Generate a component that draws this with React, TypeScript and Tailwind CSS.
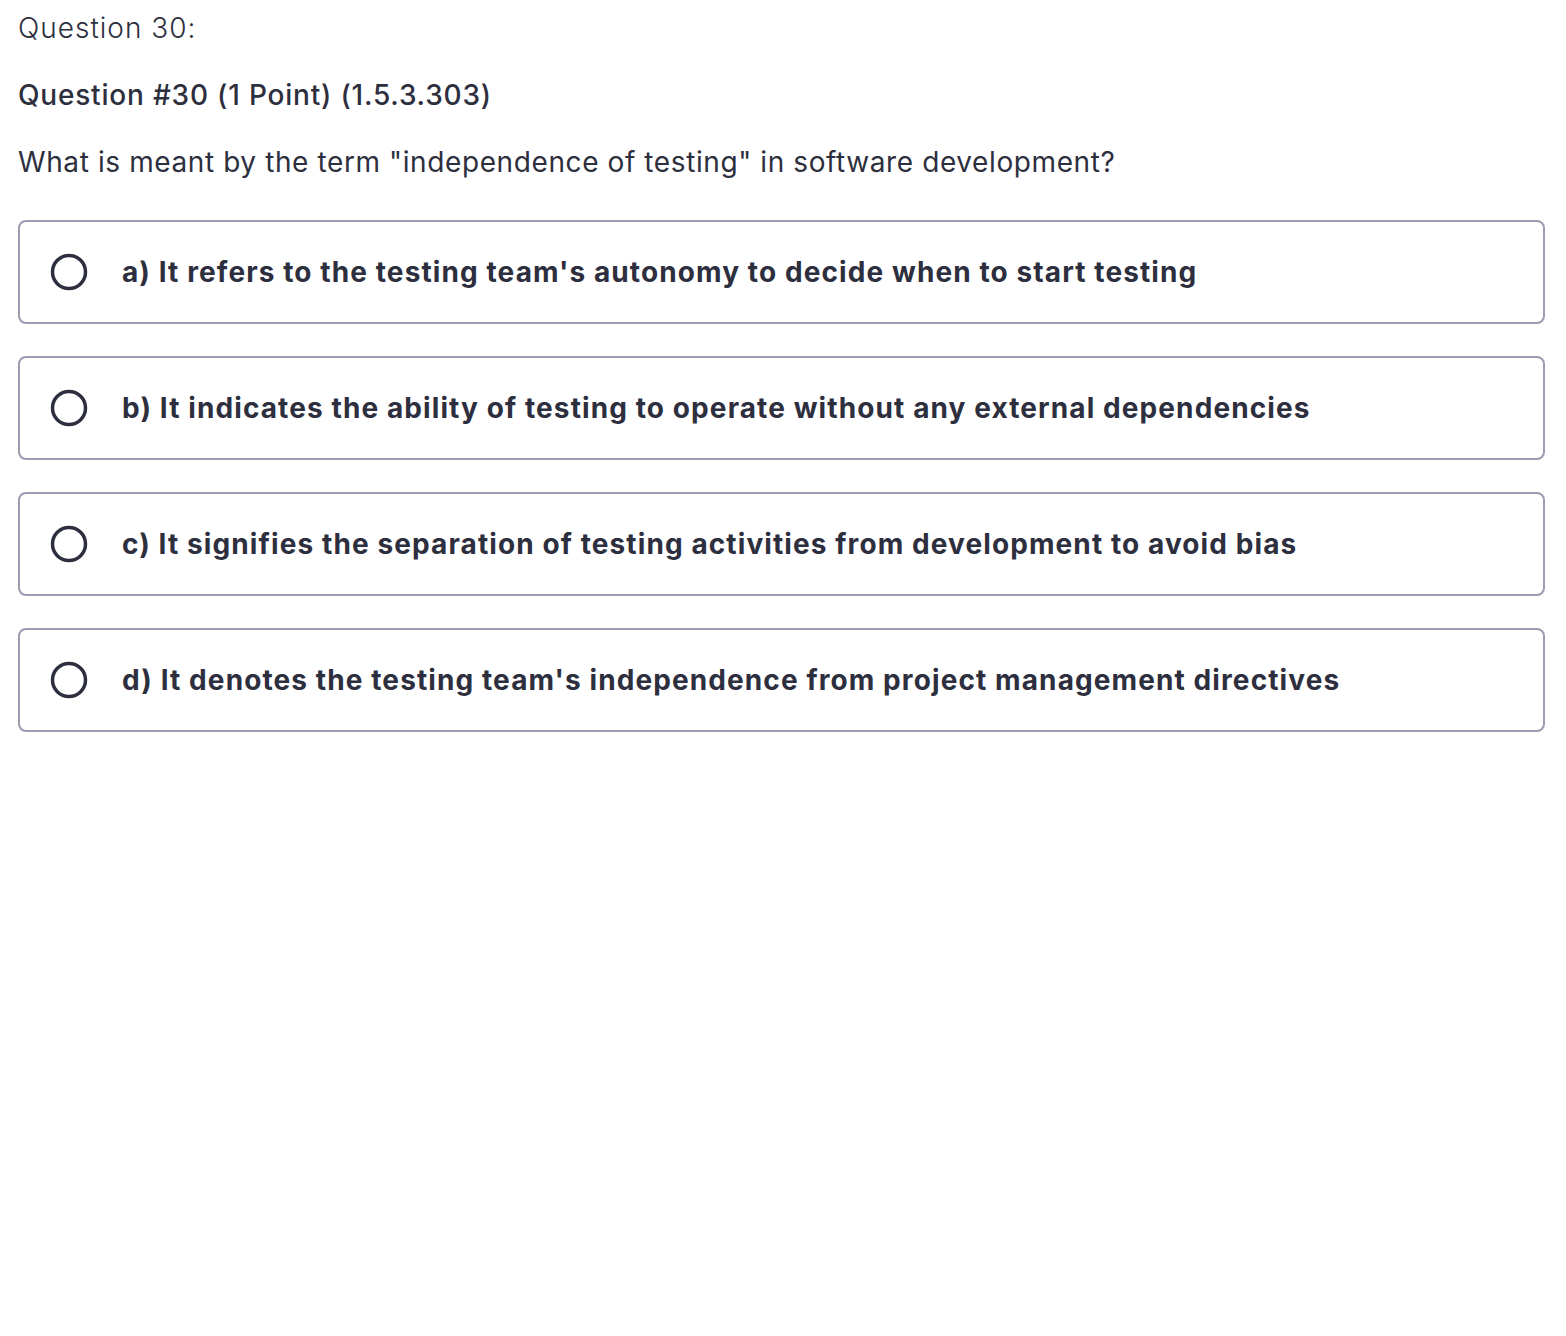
const options = [
  "a) It refers to the testing team's autonomy to decide when to start testing",
  "b) It indicates the ability of testing to operate without any external dependencies",
  "c) It signifies the separation of testing activities from development to avoid bias",
  "d) It denotes the testing team's independence from project management directives",
];

const Radio = () => (
  <svg width="38" height="38" viewBox="0 0 38 38" className="shrink-0">
    <circle cx="19" cy="19" r="16.5" fill="none" stroke="#2d2f3e" strokeWidth="3.5" />
  </svg>
);

export default function App() {
  return (
    <div className="min-h-[1336px] bg-white pl-[18px] pr-[21px] pt-[8px] font-['Inter',sans-serif] text-[#2d2f3e]">
      <div className="flex flex-col gap-[27px]">
        <p className="text-[28px] leading-[40px] font-light tracking-[1px]">Question 30:</p>
        <p className="text-[28px] leading-[40px] font-medium tracking-[0.8px]">Question #30 (1 Point) (1.5.3.303)</p>
        <p className="text-[28px] leading-[40px] font-normal tracking-[0.6px]">
          What is meant by the term "independence of testing" in software development?
        </p>
      </div>
      <div className="mt-[38px] flex flex-col gap-[32px]">
        {options.map((opt, i) => (
          <label
            key={i}
            className="flex h-[104px] items-center gap-[34px] rounded-[8px] border-2 border-[#9c9cb0] pl-[30px]"
          >
            <Radio />
            <span className="text-[28px] font-bold leading-[40px] tracking-[1.1px]">{opt}</span>
          </label>
        ))}
      </div>
    </div>
  );
}
